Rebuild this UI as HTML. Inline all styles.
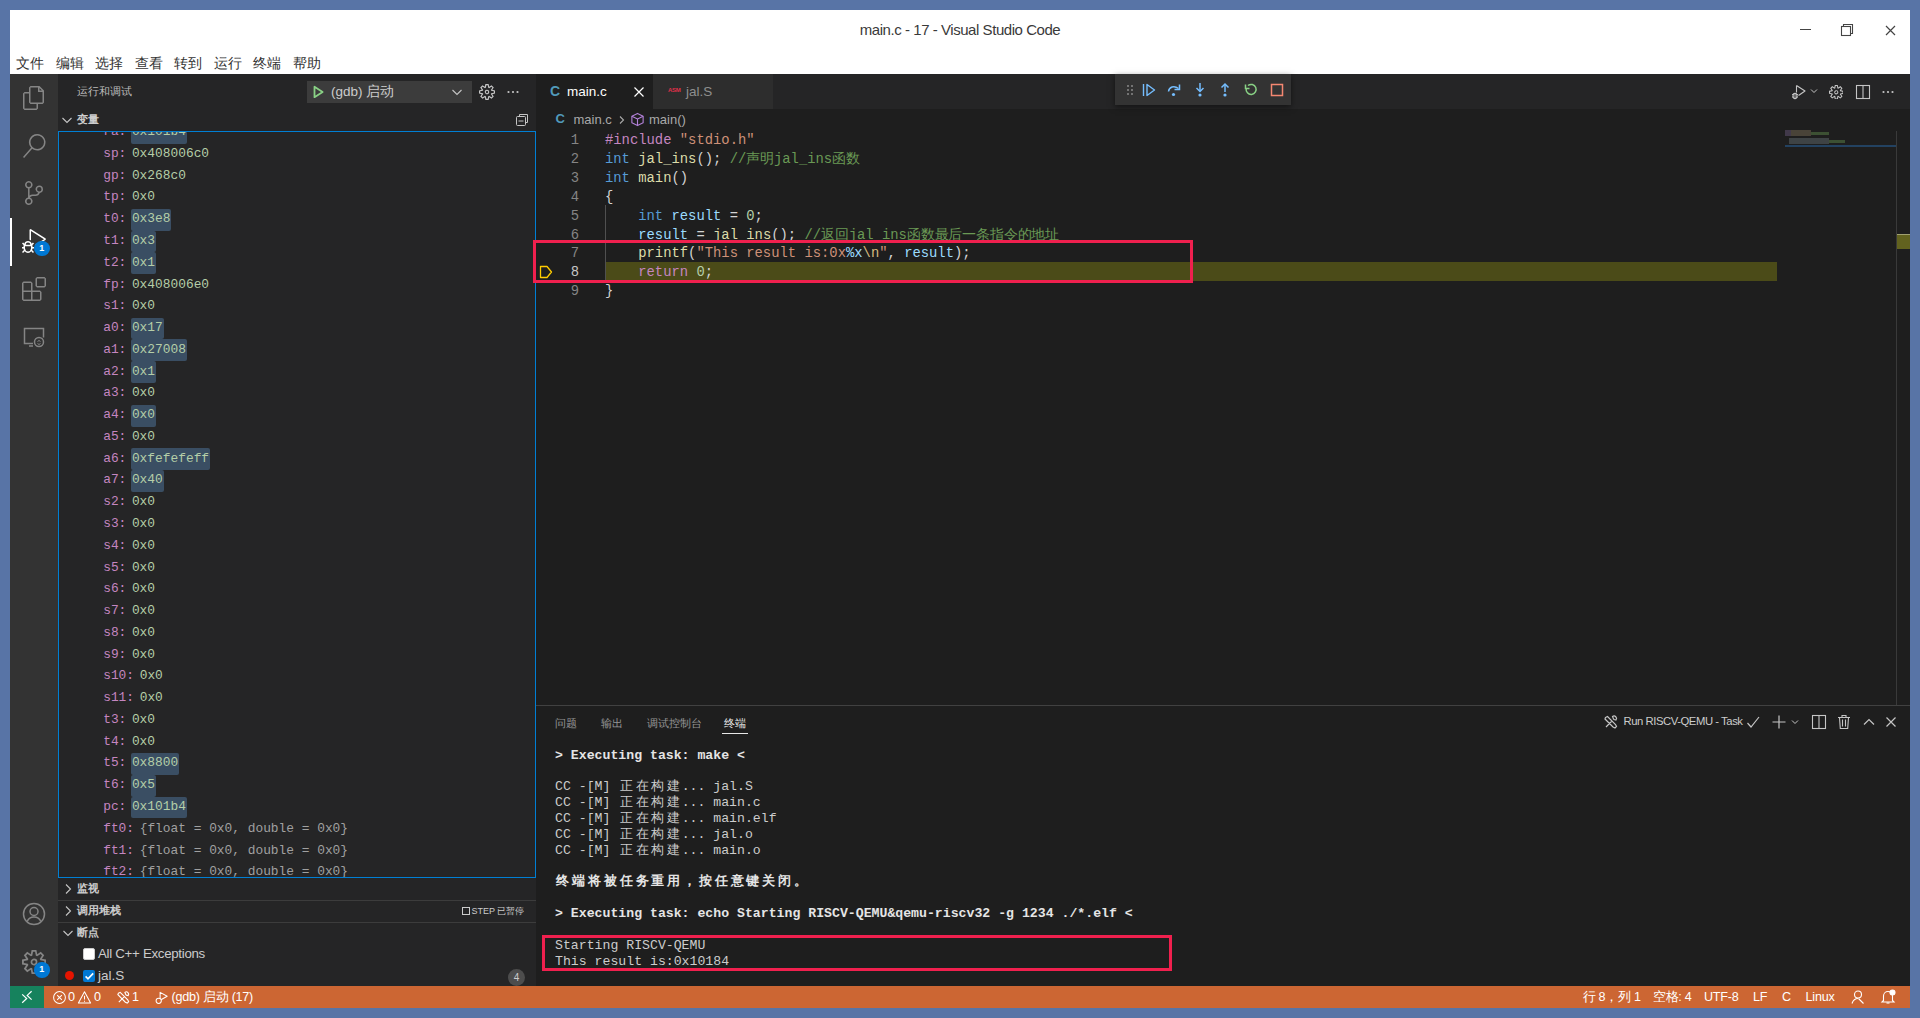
<!DOCTYPE html>
<html><head><meta charset="utf-8">
<style>
*{margin:0;padding:0;box-sizing:border-box}
html,body{width:1920px;height:1018px;overflow:hidden;background:#5874a6;font-family:"Liberation Sans",sans-serif}
.a{position:absolute;white-space:nowrap}
.mono{font-family:"Liberation Mono",monospace}
#titlebar{left:10px;top:10px;width:1900px;height:64px;background:#fff}
#act{left:10px;top:74px;width:47.5px;height:912px;background:#333}
#side{left:57.5px;top:74px;width:478px;height:912px;background:#252526}
#editor{left:535.5px;top:74px;width:1374.5px;height:631px;background:#1e1e1e}
#panel{left:535.5px;top:704.5px;width:1374.5px;height:281.5px;background:#1e1e1e;border-top:1px solid #414141}
#status{left:10px;top:986px;width:1900px;height:22px;background:#cc6633}
#remote{left:10px;top:986px;width:33.5px;height:22px;background:#16825d}
.vr{left:0px;width:476px;height:21.77px;line-height:21.77px}
.vn{color:#c586c0}.vv{color:#b5cea8}.vg{color:#a0a0a0}
.hl{top:0.6px;height:21.8px;background:#3a4e63;border-radius:2px}
.cl{white-space:pre;left:69.5px;margin-top:0.5px;height:18.9px;line-height:18.9px;color:#d4d4d4}
.ln{left:21.5px;margin-top:0.5px;width:22px;text-align:right;height:18.9px;line-height:18.9px}
.cj{font-style:normal;display:inline-block;width:13.85px;text-align:center}
.tl{white-space:pre;left:19.5px;height:15.83px;line-height:15.83px;color:#ccc}
.tj{font-style:normal;display:inline-block;width:15.84px;text-align:center}
</style></head><body>
<div id="titlebar" class="a">
<div class="a" style="left:0px;top:11px;width:1900px;text-align:center;font-size:15px;letter-spacing:-0.45px;color:#3a3a3a;line-height:18px">main.c - 17 - Visual Studio Code</div>
<div class="a" style="left:1790px;top:18.5px;width:10.5px;height:1.2px;background:#444"></div>
<svg class="a" style="left:1830px;top:13px" width="14" height="14" viewBox="0 0 14 14"><path d="M3.5 3.5V1.5h9v9h-2" fill="none" stroke="#444" stroke-width="1.1"/><rect x="1.5" y="3.5" width="9" height="9" fill="none" stroke="#444" stroke-width="1.1"/></svg>
<svg class="a" style="left:1875px;top:14.5px" width="11" height="11" viewBox="0 0 11 11"><path d="M1 1L10 10M10 1L1 10" stroke="#444" stroke-width="1.2"/></svg>
<div class="a" id="menu" style="left:0px;top:45px;height:18px;font-size:13.5px;color:#333;line-height:18px">
<span class="a" style="left:6px">文件</span><span class="a" style="left:45.5px">编辑</span><span class="a" style="left:85px">选择</span><span class="a" style="left:124.5px">查看</span><span class="a" style="left:164px">转到</span><span class="a" style="left:203.5px">运行</span><span class="a" style="left:243px">终端</span><span class="a" style="left:282.5px">帮助</span>
</div>
</div>
<div id="act" class="a">
<svg class="a" style="left:12px;top:12px" width="24" height="24" viewBox="0 0 24 24" fill="#858585"><path d="M17.5 0h-9L7 1.5V6H2.5L1 7.5v15.07L2.5 24h12.07L16 22.57V18h4.7l1.3-1.43V4.5L17.5 0zm0 2.12l2.38 2.38H17.5V2.12zm-3 20.38h-12v-15H7v9.07L8.5 18h6v4.5zm6-6h-12v-15H16V6h4.5v10.5z"/></svg>
<svg class="a" style="left:12px;top:59.5px" width="24" height="24" viewBox="0 0 24 24" fill="#858585"><path d="M15.25 0a8.25 8.25 0 0 0-6.18 13.72L1 22.88l1.12 1 8.05-9.120A8.251 8.251 0 1 0 15.25.01V0zm0 15a6.750 6.750 0 1 1 0-13.5 6.75 6.75 0 0 1 0 13.5z"/></svg>
<svg class="a" style="left:12px;top:107px" width="24" height="24" viewBox="0 0 24 24" fill="#858585"><path d="M21.007 8.222A3.738 3.738 0 0 0 15.045 5.2a3.737 3.737 0 0 0 1.156 6.583 2.988 2.988 0 0 1-2.668 1.67h-2.99a4.456 4.456 0 0 0-2.989 1.165V7.4a3.737 3.737 0 1 0-1.494 0v9.117a3.776 3.776 0 1 0 1.816.099 2.990 2.990 0 0 1 2.668-1.667h2.99a4.484 4.484 0 0 0 4.223-3.039 3.736 3.736 0 0 0 3.25-3.687zM4.565 3.738a2.242 2.242 0 1 1 4.484 0 2.242 2.242 0 0 1-4.484 0zm4.484 16.441a2.242 2.242 0 1 1-4.484 0 2.242 2.242 0 0 1 4.484 0zm8.221-9.715a2.242 2.242 0 1 1 0-4.485 2.242 2.242 0 0 1 0 4.485z"/></svg>
<div class="a" style="left:0px;top:144px;width:2px;height:47.5px;background:#fff"></div>
<svg class="a" style="left:12px;top:155px" width="24" height="24" viewBox="0 0 24 24" fill="#fff"><path d="M10.94 13.5l-1.32 1.32a3.73 3.73 0 0 0-7.24 0L1.06 13.5 0 14.56l1.72 1.72-.22.22V18H0v1.5h1.5v.08c.077.489.214.966.41 1.42L0 22.94 1.06 24l1.65-1.65A4.308 4.308 0 0 0 6 24a4.31 4.31 0 0 0 3.29-1.650L10.94 24 12 22.94 10.09 21c.198-.464.336-.951.41-1.45v-.1H12V18h-1.5v-1.5l-.22-.22L12 14.56l-1.06-1.06zM6 13.5a2.25 2.25 0 0 1 2.25 2.25h-4.5A2.25 2.25 0 0 1 6 13.5zm3 6a3.33 3.33 0 0 1-3 3 3.33 3.330 0 0 1-3-3v-2.25h6v2.25zm14.76-9.9v1.26L13.5 17.37V15.6l8.5-5.37L9 2v9.46a5.07 5.07 0 0 0-1.5-.72V.63L8.64 0l15.12 9.6z"/></svg>
<div class="a" style="left:24px;top:166.5px;width:15.5px;height:15.5px;border-radius:50%;background:#0078d4;color:#fff;font-size:9px;line-height:15.5px;text-align:center;font-weight:bold">1</div>
<svg class="a" style="left:12px;top:202.5px" width="24" height="24" viewBox="0 0 24 24" fill="#858585"><path d="M13.5 1.5L15 0h7.5L24 1.5V9l-1.5 1.5H15L13.5 9V1.5zm1.5 0V9h7.5V1.5H15zM0 15V6l1.5-1.5H9L10.5 6v7.5H18l1.5 1.5v7.5L18 24H1.5L0 22.5V15zm9-1.5V6H1.5v7.5H9zM9 15H1.5v7.5H9V15zm1.5 7.5H18V15h-7.5v7.5z"/></svg>
<svg class="a" style="left:12px;top:250px" width="24" height="24" viewBox="0 0 24 24" fill="none" stroke="#858585" stroke-width="1.5"><path d="M11 19.5H2.5v-15h19v9"/><path d="M7 22h4"/><circle cx="17" cy="18" r="4.5"/><path d="M15.5 17.5l1.5-1 1.5 1M15.5 19.5l1.5 1 1.5-1" stroke-width="1"/></svg>
<svg class="a" style="left:12px;top:828px" width="24" height="24" viewBox="0 0 24 24" fill="none" stroke="#858585" stroke-width="1.5"><circle cx="12" cy="12" r="10.5"/><circle cx="12" cy="9.5" r="4"/><path d="M5.2 19.5c1.2-3 3.7-4.6 6.8-4.6s5.6 1.6 6.8 4.6"/></svg>
<svg class="a" style="left:12px;top:876px" width="24" height="24" viewBox="0 0 24 24" fill="#858585"><path d="M19.85 8.75l4.15.83v4.84l-4.15.83 2.35 3.52-3.43 3.43-3.52-2.35-.83 4.15H9.58l-.83-4.15-3.52 2.35-3.43-3.43 2.35-3.52L0 14.42V9.58l4.15-.83L1.8 5.23 5.230 1.8l3.52 2.35L9.58 0h4.84l.83 4.15 3.52-2.35 3.43 3.43-2.35 3.52zm-1.57 5.07l4-.81v-2l-4-.81-.54-1.3 2.29-3.43-1.43-1.43-3.43 2.29-1.3-.54-.81-4h-2l-.81 4-1.3.54-3.43-2.29-1.43 1.43L6.38 8.9l-.54 1.3-4 .81v2l4 .81.54 1.3-2.29 3.43 1.43 1.43 3.43-2.29 1.3.54.81 4h2l.81-4 1.3-.54 3.43 2.29 1.43-1.43-2.29-3.43.54-1.3zm-8.186-4.672A3.43 3.43 0 0 1 12 8.57 3.44 3.44 0 0 1 15.43 12a3.43 3.43 0 1 1-5.336-2.852zm.956 4.274c.281.188.612.288.95.288A1.7 1.7 0 0 0 13.71 12a1.71 1.71 0 1 0-2.66 1.422z"/></svg>
<div class="a" style="left:24px;top:888px;width:15.5px;height:15.5px;border-radius:50%;background:#0078d4;color:#fff;font-size:9px;line-height:15.5px;text-align:center;font-weight:bold">1</div>
</div>
<div id="side" class="a">
<div class="a" style="left:19.5px;top:10px;font-size:11px;line-height:15px;color:#bbb">运行和调试</div>
<div class="a" style="left:249.5px;top:7px;width:165px;height:22px;background:#3c3c3c"></div>
<svg class="a" style="left:252.5px;top:10px" width="16" height="16" viewBox="0 0 16 16"><path d="M4.5 2.8v10.4L12.6 8z" fill="none" stroke="#89d185" stroke-width="1.8" stroke-linejoin="round"/></svg>
<div class="a" style="left:273.5px;top:8px;font-size:13.5px;line-height:20px;color:#ccc">(gdb) 启动</div>
<svg class="a" style="left:391.5px;top:10px" width="16" height="16" viewBox="0 0 16 16"><path d="M3.5 6l4.5 4.5L12.5 6" fill="none" stroke="#c5c5c5" stroke-width="1.1"/></svg>
<svg class="a" style="left:421.5px;top:9.5px" width="16" height="16" viewBox="0 0 24 24" fill="#c5c5c5"><path d="M19.85 8.75l4.15.83v4.84l-4.15.83 2.35 3.52-3.43 3.43-3.52-2.35-.83 4.15H9.58l-.83-4.15-3.52 2.35-3.43-3.43 2.35-3.52L0 14.42V9.58l4.15-.83L1.8 5.23 5.230 1.8l3.52 2.35L9.58 0h4.84l.83 4.15 3.52-2.35 3.43 3.43-2.35 3.52zm-1.57 5.07l4-.81v-2l-4-.81-.54-1.3 2.29-3.43-1.43-1.43-3.43 2.29-1.3-.54-.81-4h-2l-.81 4-1.3.54-3.43-2.29-1.43 1.43L6.38 8.9l-.54 1.3-4 .81v2l4 .81.54 1.3-2.29 3.43 1.43 1.43 3.43-2.29 1.3.54.81 4h2l.81-4 1.3-.54 3.43 2.29 1.43-1.43-2.29-3.43.54-1.3zm-8.186-4.672A3.43 3.43 0 0 1 12 8.57 3.44 3.44 0 0 1 15.43 12a3.43 3.43 0 1 1-5.336-2.852zm.956 4.274c.281.188.612.288.95.288A1.7 1.7 0 0 0 13.71 12a1.71 1.71 0 1 0-2.66 1.422z"/></svg>
<svg class="a" style="left:447px;top:9.5px" width="16" height="16" viewBox="0 0 16 16" fill="#c5c5c5"><circle cx="3.5" cy="8" r="1.1"/><circle cx="8" cy="8" r="1.1"/><circle cx="12.5" cy="8" r="1.1"/></svg>
<svg class="a" style="left:1.5px;top:38px" width="16" height="16" viewBox="0 0 16 16"><path d="M3.5 6l4.5 4.5L12.5 6" fill="none" stroke="#c5c5c5" stroke-width="1.1"/></svg>
<div class="a" style="left:19.5px;top:37.5px;font-size:11px;line-height:15px;color:#ccc;font-weight:bold">变量</div>
<svg class="a" style="left:456px;top:37.5px" width="16" height="16" viewBox="0 0 16 16" fill="none" stroke="#c5c5c5" stroke-width="1"><path d="M5.5 4.5V2.5h8v8h-2"/><rect x="2.5" y="4.5" width="9" height="9" rx="1"/><path d="M4.5 9h5"/></svg>
<div class="a" id="varbox" style="left:0px;top:57px;width:478px;height:746.5px;border:1px solid #007fd4"></div>
<div class="a mono" style="left:1px;top:58px;width:476px;height:744.5px;overflow:hidden;font-size:12.86px">
<div class="a vr" style="top:-10.87px"><span class="a vn" style="left:44.7px">ra:</span><span class="a hl" style="left:72.7px;width:55.5px"></span><span class="a vv" style="left:73.4px">0x101b4</span></div>
<div class="a vr" style="top:10.90px"><span class="a vn" style="left:44.7px">sp:</span><span class="a vv" style="left:73.4px">0x408006c0</span></div>
<div class="a vr" style="top:32.67px"><span class="a vn" style="left:44.7px">gp:</span><span class="a vv" style="left:73.4px">0x268c0</span></div>
<div class="a vr" style="top:54.44px"><span class="a vn" style="left:44.7px">tp:</span><span class="a vv" style="left:73.4px">0x0</span></div>
<div class="a vr" style="top:76.21px"><span class="a vn" style="left:44.7px">t0:</span><span class="a hl" style="left:72.7px;width:40.1px"></span><span class="a vv" style="left:73.4px">0x3e8</span></div>
<div class="a vr" style="top:97.98px"><span class="a vn" style="left:44.7px">t1:</span><span class="a hl" style="left:72.7px;width:24.6px"></span><span class="a vv" style="left:73.4px">0x3</span></div>
<div class="a vr" style="top:119.75px"><span class="a vn" style="left:44.7px">t2:</span><span class="a hl" style="left:72.7px;width:24.6px"></span><span class="a vv" style="left:73.4px">0x1</span></div>
<div class="a vr" style="top:141.52px"><span class="a vn" style="left:44.7px">fp:</span><span class="a vv" style="left:73.4px">0x408006e0</span></div>
<div class="a vr" style="top:163.29px"><span class="a vn" style="left:44.7px">s1:</span><span class="a vv" style="left:73.4px">0x0</span></div>
<div class="a vr" style="top:185.06px"><span class="a vn" style="left:44.7px">a0:</span><span class="a hl" style="left:72.7px;width:32.4px"></span><span class="a vv" style="left:73.4px">0x17</span></div>
<div class="a vr" style="top:206.83px"><span class="a vn" style="left:44.7px">a1:</span><span class="a hl" style="left:72.7px;width:55.5px"></span><span class="a vv" style="left:73.4px">0x27008</span></div>
<div class="a vr" style="top:228.60px"><span class="a vn" style="left:44.7px">a2:</span><span class="a hl" style="left:72.7px;width:24.6px"></span><span class="a vv" style="left:73.4px">0x1</span></div>
<div class="a vr" style="top:250.37px"><span class="a vn" style="left:44.7px">a3:</span><span class="a vv" style="left:73.4px">0x0</span></div>
<div class="a vr" style="top:272.14px"><span class="a vn" style="left:44.7px">a4:</span><span class="a hl" style="left:72.7px;width:24.6px"></span><span class="a vv" style="left:73.4px">0x0</span></div>
<div class="a vr" style="top:293.91px"><span class="a vn" style="left:44.7px">a5:</span><span class="a vv" style="left:73.4px">0x0</span></div>
<div class="a vr" style="top:315.68px"><span class="a vn" style="left:44.7px">a6:</span><span class="a hl" style="left:72.7px;width:78.7px"></span><span class="a vv" style="left:73.4px">0xfefefeff</span></div>
<div class="a vr" style="top:337.45px"><span class="a vn" style="left:44.7px">a7:</span><span class="a hl" style="left:72.7px;width:32.4px"></span><span class="a vv" style="left:73.4px">0x40</span></div>
<div class="a vr" style="top:359.22px"><span class="a vn" style="left:44.7px">s2:</span><span class="a vv" style="left:73.4px">0x0</span></div>
<div class="a vr" style="top:380.99px"><span class="a vn" style="left:44.7px">s3:</span><span class="a vv" style="left:73.4px">0x0</span></div>
<div class="a vr" style="top:402.76px"><span class="a vn" style="left:44.7px">s4:</span><span class="a vv" style="left:73.4px">0x0</span></div>
<div class="a vr" style="top:424.53px"><span class="a vn" style="left:44.7px">s5:</span><span class="a vv" style="left:73.4px">0x0</span></div>
<div class="a vr" style="top:446.30px"><span class="a vn" style="left:44.7px">s6:</span><span class="a vv" style="left:73.4px">0x0</span></div>
<div class="a vr" style="top:468.07px"><span class="a vn" style="left:44.7px">s7:</span><span class="a vv" style="left:73.4px">0x0</span></div>
<div class="a vr" style="top:489.84px"><span class="a vn" style="left:44.7px">s8:</span><span class="a vv" style="left:73.4px">0x0</span></div>
<div class="a vr" style="top:511.61px"><span class="a vn" style="left:44.7px">s9:</span><span class="a vv" style="left:73.4px">0x0</span></div>
<div class="a vr" style="top:533.38px"><span class="a vn" style="left:44.7px">s10:</span><span class="a vv" style="left:81.2px">0x0</span></div>
<div class="a vr" style="top:555.15px"><span class="a vn" style="left:44.7px">s11:</span><span class="a vv" style="left:81.2px">0x0</span></div>
<div class="a vr" style="top:576.92px"><span class="a vn" style="left:44.7px">t3:</span><span class="a vv" style="left:73.4px">0x0</span></div>
<div class="a vr" style="top:598.69px"><span class="a vn" style="left:44.7px">t4:</span><span class="a vv" style="left:73.4px">0x0</span></div>
<div class="a vr" style="top:620.46px"><span class="a vn" style="left:44.7px">t5:</span><span class="a hl" style="left:72.7px;width:47.8px"></span><span class="a vv" style="left:73.4px">0x8800</span></div>
<div class="a vr" style="top:642.23px"><span class="a vn" style="left:44.7px">t6:</span><span class="a hl" style="left:72.7px;width:24.6px"></span><span class="a vv" style="left:73.4px">0x5</span></div>
<div class="a vr" style="top:664.00px"><span class="a vn" style="left:44.7px">pc:</span><span class="a hl" style="left:72.7px;width:55.5px"></span><span class="a vv" style="left:73.4px">0x101b4</span></div>
<div class="a vr" style="top:685.77px"><span class="a vn" style="left:44.7px">ft0:</span><span class="a vg" style="left:81.2px">{float = 0x0, double = 0x0}</span></div>
<div class="a vr" style="top:707.54px"><span class="a vn" style="left:44.7px">ft1:</span><span class="a vg" style="left:81.2px">{float = 0x0, double = 0x0}</span></div>
<div class="a vr" style="top:729.31px"><span class="a vn" style="left:44.7px">ft2:</span><span class="a vg" style="left:81.2px">{float = 0x0, double = 0x0}</span></div>
</div>
<div class="a" style="left:0px;top:825.5px;width:478px;height:1px;background:#3c3c3c"></div>
<div class="a" style="left:0px;top:847.5px;width:478px;height:1px;background:#3c3c3c"></div>
<svg class="a" style="left:2px;top:806.5px" width="16" height="16" viewBox="0 0 16 16"><path d="M6 3.5l4.5 4.5L6 12.5" fill="none" stroke="#c5c5c5" stroke-width="1.1"/></svg>
<div class="a" style="left:19.5px;top:807px;font-size:11px;line-height:15px;color:#ccc;font-weight:bold">监视</div>
<svg class="a" style="left:2px;top:828.5px" width="16" height="16" viewBox="0 0 16 16"><path d="M6 3.5l4.5 4.5L6 12.5" fill="none" stroke="#c5c5c5" stroke-width="1.1"/></svg>
<div class="a" style="left:19.5px;top:829px;font-size:11px;line-height:15px;color:#ccc;font-weight:bold">调用堆栈</div>
<div class="a" style="left:404px;top:830.5px;font-size:9px;line-height:12px;color:#ccc"><span style="display:inline-block;width:8px;height:8px;border:1px solid #ccc;vertical-align:-1px;margin-right:2px"></span>STEP 已暂停</div>
<svg class="a" style="left:2px;top:851px" width="16" height="16" viewBox="0 0 16 16"><path d="M3.5 6l4.5 4.5L12.5 6" fill="none" stroke="#c5c5c5" stroke-width="1.1"/></svg>
<div class="a" style="left:19.5px;top:851px;font-size:11px;line-height:15px;color:#ccc;font-weight:bold">断点</div>
<div class="a" style="left:25px;top:874px;width:12px;height:12px;background:#fff;border:1px solid #ccc;border-radius:2px"></div>
<div class="a" style="left:40.5px;top:871px;font-size:13.3px;letter-spacing:-0.3px;line-height:18px;color:#ccc">All C++ Exceptions</div>
<div class="a" style="left:7px;top:897px;width:9px;height:9px;border-radius:50%;background:#e51400"></div>
<div class="a" style="left:25px;top:895.5px;width:12.5px;height:12.5px;background:#0078d4;border-radius:2px"></div>
<svg class="a" style="left:25px;top:895.5px" width="12.5" height="12.5" viewBox="0 0 12 12"><path d="M2.5 6.2l2.3 2.3L9.8 3.3" fill="none" stroke="#fff" stroke-width="1.6"/></svg>
<div class="a" style="left:40.5px;top:892.5px;font-size:13.5px;line-height:18px;color:#ccc">jal.S</div>
<div class="a" style="left:450.5px;top:894.5px;width:17px;height:17px;border-radius:50%;background:#4d4d4d;color:#ccc;font-size:10px;line-height:17px;text-align:center">4</div>
</div>
<div id="editor" class="a">
<div class="a" style="left:0px;top:0px;width:1374.5px;height:34.5px;background:#252526"></div>
<div class="a" style="left:0px;top:0px;width:117px;height:34.5px;background:#1e1e1e"></div>
<div class="a" style="left:14.5px;top:8px;font-size:14px;line-height:18px;color:#519aba;font-weight:bold">C</div>
<div class="a" style="left:31.5px;top:8.5px;font-size:13.5px;line-height:18px;color:#fff">main.c</div>
<svg class="a" style="left:95.5px;top:9.5px" width="16" height="16" viewBox="0 0 16 16"><path d="M3.5 3.5l9 9M12.5 3.5l-9 9" stroke="#fff" stroke-width="1.2"/></svg>
<div class="a" style="left:117px;top:0px;width:120px;height:34.5px;background:#2d2d2d"></div>
<div class="a" style="left:132.5px;top:12px;font-size:6px;line-height:9px;color:#e0304a;font-weight:bold;letter-spacing:-0.3px">ASM</div>
<div class="a" style="left:150.5px;top:8.5px;font-size:13.5px;line-height:18px;color:#8f8f8f">jal.S</div>
<div class="a" style="left:579px;top:0px;width:176.5px;height:31px;background:#333;box-shadow:0 2px 6px rgba(0,0,0,.5)"></div>
<svg class="a" style="left:586px;top:7.5px" width="16" height="16" viewBox="0 0 16 16" fill="#8a8a8a"><circle cx="6" cy="4" r="1"/><circle cx="10" cy="4" r="1"/><circle cx="6" cy="8" r="1"/><circle cx="10" cy="8" r="1"/><circle cx="6" cy="12" r="1"/><circle cx="10" cy="12" r="1"/></svg>
<svg class="a" style="left:605px;top:7.5px" width="16" height="16" viewBox="0 0 16 16" fill="none" stroke="#75beff" stroke-width="1.4"><path d="M2.5 2v12"/><path d="M6 2.5v11L13.5 8z" stroke-linejoin="round"/></svg>
<svg class="a" style="left:630.5px;top:7.5px" width="16" height="16" viewBox="0 0 16 16" fill="none" stroke="#75beff" stroke-width="1.5"><path d="M2.5 9.5C3 5 8 3 12.5 6.5"/><path d="M13.5 2.5v5h-5"/><circle cx="7.5" cy="12.5" r="1.6" fill="#75beff" stroke="none"/></svg>
<svg class="a" style="left:656px;top:7.5px" width="16" height="16" viewBox="0 0 16 16" fill="none" stroke="#75beff" stroke-width="1.5"><path d="M8 1v8"/><path d="M4.5 6l3.5 3.5L11.5 6"/><circle cx="8" cy="13" r="1.6" fill="#75beff" stroke="none"/></svg>
<svg class="a" style="left:681.5px;top:7.5px" width="16" height="16" viewBox="0 0 16 16" fill="none" stroke="#75beff" stroke-width="1.5"><path d="M8 10V2"/><path d="M4.5 5.5L8 2l3.5 3.5"/><circle cx="8" cy="13" r="1.6" fill="#75beff" stroke="none"/></svg>
<svg class="a" style="left:707.5px;top:7.5px" width="16" height="16" viewBox="0 0 16 16" fill="none" stroke="#89d185" stroke-width="1.5"><path d="M3.2 6.5A5 5 0 1 0 5 3.5"/><path d="M2.5 2.5v4h4"/></svg>
<svg class="a" style="left:733px;top:7.5px" width="16" height="16" viewBox="0 0 16 16" fill="none" stroke="#f48771" stroke-width="1.5"><rect x="2.5" y="2.5" width="11" height="11"/></svg>
<svg class="a" style="left:1255px;top:9.5px" width="18" height="16" viewBox="0 0 18 16" fill="none" stroke="#c5c5c5" stroke-width="1.1"><path d="M5.5 1.5v7M5.5 1.5L14 7l-6.5 4.5" stroke-linejoin="round"/><ellipse cx="4" cy="12" rx="2" ry="2.6" fill="#1e1e1e"/><path d="M1 10.5h1.5M1 13h1.5M5.5 10.5H7M5.5 13H7M4 9.4v5" stroke-width="0.9"/></svg>
<svg class="a" style="left:1273px;top:12px" width="10" height="10" viewBox="0 0 10 10"><path d="M2 3.5l3 3 3-3" fill="none" stroke="#c5c5c5" stroke-width="1"/></svg>
<svg class="a" style="left:1293.2px;top:10.6px" width="14.6" height="14.6" viewBox="0 0 24 24" fill="#c5c5c5"><path d="M19.85 8.75l4.15.83v4.84l-4.15.83 2.35 3.52-3.43 3.43-3.52-2.35-.83 4.15H9.58l-.83-4.15-3.52 2.35-3.43-3.43 2.35-3.52L0 14.42V9.58l4.15-.83L1.8 5.23 5.230 1.8l3.52 2.35L9.58 0h4.84l.83 4.15 3.52-2.35 3.43 3.43-2.35 3.52zm-1.57 5.07l4-.81v-2l-4-.81-.54-1.3 2.29-3.43-1.43-1.43-3.43 2.29-1.3-.54-.81-4h-2l-.81 4-1.3.54-3.43-2.29-1.43 1.43L6.38 8.9l-.54 1.3-4 .81v2l4 .81.54 1.3-2.29 3.43 1.43 1.43 3.43-2.29 1.3.54.81 4h2l.81-4 1.3-.54 3.43 2.29 1.43-1.43-2.29-3.43.54-1.3zm-8.186-4.672A3.43 3.43 0 0 1 12 8.57 3.44 3.44 0 0 1 15.430 12a3.43 3.43 0 1 1-5.336-2.852zm.956 4.274c.281.188.612.288.95.288A1.7 1.7 0 0 0 13.71 12a1.71 1.71 0 1 0-2.66 1.422z"/></svg>
<svg class="a" style="left:1319px;top:10px" width="16" height="16" viewBox="0 0 16 16" fill="none" stroke="#c5c5c5" stroke-width="1.1"><rect x="1.5" y="1.5" width="13" height="13"/><path d="M8 1.5v13"/></svg>
<svg class="a" style="left:1344px;top:10px" width="16" height="16" viewBox="0 0 16 16" fill="#c5c5c5"><circle cx="3.5" cy="8" r="1.1"/><circle cx="8" cy="8" r="1.1"/><circle cx="12.5" cy="8" r="1.1"/></svg>
<div class="a" style="left:20px;top:37px;font-size:13px;line-height:16px;color:#519aba;font-weight:bold">C</div>
<div class="a" style="left:38px;top:37.5px;font-size:13px;line-height:16px;color:#a9a9a9">main.c</div>
<svg class="a" style="left:80.5px;top:38.5px" width="12" height="14" viewBox="0 0 12 14"><path d="M4 3.5L7.5 7 4 10.5" fill="none" stroke="#a9a9a9" stroke-width="1.1"/></svg>
<svg class="a" style="left:94.5px;top:38px" width="15" height="15" viewBox="0 0 16 16" fill="none" stroke="#b180d7" stroke-width="1.2" stroke-linejoin="round"><path d="M8 1.5l6 3v7l-6 3-6-3v-7z"/><path d="M2 4.5l6 3 6-3M8 7.5v7"/></svg>
<div class="a" style="left:113.5px;top:37.5px;font-size:13px;line-height:16px;color:#a9a9a9">main()</div>
<div class="a" style="left:69.5px;top:188.0px;width:1172.3px;height:18.7px;background:#4b4b18"></div>
<div class="a" style="left:69.0px;top:131.0px;width:1px;height:76px;background:#505050"></div>
<svg class="a" style="left:2.0px;top:189.5" width="16" height="16" viewBox="0 0 16 16"><path d="M2.5 2.5h6.5l4.5 5.5-4.5 5.5H2.5z" fill="none" stroke="#ffcc00" stroke-width="1.3" stroke-linejoin="round"/></svg>
<div class="a mono" style="left:0px;top:0px;font-size:13.85px">
<div class="a cl" style="top:56.6px"><span style="color:#c586c0">#include </span><span style="color:#ce9178">"stdio.h"</span></div>
<div class="a ln" style="top:56.6px;color:#858585">1</div>
<div class="a cl" style="top:75.5px"><span style="color:#569cd6">int</span><span style="color:#d4d4d4"> </span><span style="color:#dcdcaa">jal_ins</span><span style="color:#d4d4d4">(); </span><span style="color:#6a9955">//<i class="cj">声</i><i class="cj">明</i>jal_ins<i class="cj">函</i><i class="cj">数</i></span></div>
<div class="a ln" style="top:75.5px;color:#858585">2</div>
<div class="a cl" style="top:94.4px"><span style="color:#569cd6">int</span><span style="color:#d4d4d4"> </span><span style="color:#dcdcaa">main</span><span style="color:#d4d4d4">()</span></div>
<div class="a ln" style="top:94.4px;color:#858585">3</div>
<div class="a cl" style="top:113.2px"><span style="color:#d4d4d4">{</span></div>
<div class="a ln" style="top:113.2px;color:#858585">4</div>
<div class="a cl" style="top:132.2px"><span style="color:#d4d4d4">    </span><span style="color:#569cd6">int</span><span style="color:#d4d4d4"> </span><span style="color:#9cdcfe">result</span><span style="color:#d4d4d4"> = </span><span style="color:#b5cea8">0</span><span style="color:#d4d4d4">;</span></div>
<div class="a ln" style="top:132.2px;color:#858585">5</div>
<div class="a cl" style="top:151.1px"><span style="color:#d4d4d4">    </span><span style="color:#9cdcfe">result</span><span style="color:#d4d4d4"> = </span><span style="color:#dcdcaa">jal_ins</span><span style="color:#d4d4d4">(); </span><span style="color:#6a9955">//<i class="cj">返</i><i class="cj">回</i>jal_ins<i class="cj">函</i><i class="cj">数</i><i class="cj">最</i><i class="cj">后</i><i class="cj">一</i><i class="cj">条</i><i class="cj">指</i><i class="cj">令</i><i class="cj">的</i><i class="cj">地</i><i class="cj">址</i></span></div>
<div class="a ln" style="top:151.1px;color:#858585">6</div>
<div class="a cl" style="top:169.9px"><span style="color:#d4d4d4">    </span><span style="color:#dcdcaa">printf</span><span style="color:#d4d4d4">(</span><span style="color:#ce9178">"This result is:0x</span><span style="color:#9cdcfe">%x</span><span style="color:#d7ba7d">\n</span><span style="color:#ce9178">"</span><span style="color:#d4d4d4">, </span><span style="color:#9cdcfe">result</span><span style="color:#d4d4d4">);</span></div>
<div class="a ln" style="top:169.9px;color:#858585">7</div>
<div class="a cl" style="top:188.8px"><span style="color:#d4d4d4">    </span><span style="color:#c586c0">return</span><span style="color:#d4d4d4"> </span><span style="color:#b5cea8">0</span><span style="color:#d4d4d4">;</span></div>
<div class="a ln" style="top:188.8px;color:#c6c6c6">8</div>
<div class="a cl" style="top:207.8px"><span style="color:#d4d4d4">}</span></div>
<div class="a ln" style="top:207.8px;color:#858585">9</div>
</div>
<div class="a" style="left:-2.5px;top:166.0px;width:659.5px;height:43.0px;border:3px solid #f0204e"></div>
<div class="a" style="left:1360.5px;top:57.0px;width:1px;height:573.5px;background:#3a3a3a"></div>
<div class="a" style="left:1361.5px;top:159.5px;width:13px;height:15.5px;background:#62621f"></div>
<div class="a" style="left:1361.5px;top:159.5px;width:13px;height:1.5px;background:#a0a070"></div>
<div class="a" style="left:1249.5px;top:56px;width:6px;height:6px;background:#6c5a80;opacity:.45"></div>
<div class="a" style="left:1255.5px;top:56px;width:20px;height:6px;background:#8a7a60;opacity:.4"></div>
<div class="a" style="left:1275.5px;top:58px;width:18px;height:3px;background:#557a45;opacity:.55"></div>
<div class="a" style="left:1253.5px;top:63.5px;width:40px;height:6px;background:#7a8a90;opacity:.35"></div>
<div class="a" style="left:1293.5px;top:66px;width:16px;height:3px;background:#557a45;opacity:.55"></div>
<div class="a" style="left:1249.5px;top:70.5px;width:111px;height:2.5px;background:#264f78;opacity:.75"></div>
</div>
<div id="panel" class="a">
<div class="a" style="left:19.5px;top:10px;font-size:11px;line-height:15px;color:#969696">问题</div>
<div class="a" style="left:65.3px;top:10px;font-size:11px;line-height:15px;color:#969696">输出</div>
<div class="a" style="left:111.2px;top:10px;font-size:11px;line-height:15px;color:#969696">调试控制台</div>
<div class="a" style="left:188.25px;top:10px;font-size:11px;line-height:15px;color:#e7e7e7">终端</div>
<div class="a" style="left:186.5px;top:27.8px;width:26px;height:1px;background:#e7e7e7"></div>
<svg class="a" style="left:1067.5px;top:8.5px" width="16" height="16" viewBox="0 0 16 16" fill="none" stroke="#c5c5c5" stroke-width="1.2"><path d="M3 13l6-6M2.5 3.5l2-1 8 8 1 2-1.5 1.5-2-1-8-8z"/><path d="M9.5 2.5a2.5 2.5 0 0 1 3.5 3.5L11 5.5 10.5 5z"/></svg>
<div class="a" style="left:1088.0px;top:8.5px;font-size:11.3px;line-height:15px;color:#ccc;letter-spacing:-0.45px">Run RISCV-QEMU - Task</div>
<svg class="a" style="left:1209.5px;top:8.5px" width="16" height="16" viewBox="0 0 16 16" fill="none" stroke="#c5c5c5" stroke-width="1.2"><path d="M2.5 9l3.5 4L14 3"/></svg>
<svg class="a" style="left:1235.5px;top:8.5px" width="16" height="16" viewBox="0 0 16 16" fill="none" stroke="#c5c5c5" stroke-width="1.2"><path d="M8 1.5v13M1.5 8h13"/></svg>
<svg class="a" style="left:1254.5px;top:11.5px" width="10" height="10" viewBox="0 0 10 10"><path d="M2 3.5l3 3 3-3" fill="none" stroke="#c5c5c5" stroke-width="1"/></svg>
<svg class="a" style="left:1275.0px;top:8.5px" width="16" height="16" viewBox="0 0 16 16" fill="none" stroke="#c5c5c5" stroke-width="1.1"><rect x="1.5" y="1.5" width="13" height="13"/><path d="M8 1.5v13"/></svg>
<svg class="a" style="left:1300.0px;top:8.5px" width="16" height="16" viewBox="0 0 16 16" fill="none" stroke="#c5c5c5" stroke-width="1.1"><path d="M2 3.5h12M6 3.5V1.5h4v2M3.5 3.5l.8 11h7.4l.8-11M6.5 5.5v7M9.5 5.5v7"/></svg>
<svg class="a" style="left:1325.5px;top:8.5px" width="16" height="16" viewBox="0 0 16 16" fill="none" stroke="#c5c5c5" stroke-width="1.2"><path d="M3 10.5l5-5 5 5"/></svg>
<svg class="a" style="left:1347.5px;top:8.5px" width="16" height="16" viewBox="0 0 16 16" fill="none" stroke="#c5c5c5" stroke-width="1.2"><path d="M3.5 3.5l9 9M12.5 3.5l-9 9"/></svg>
<div class="a mono" style="left:0;top:0;font-size:13.2px">
<div class="a tl" style="top:42.2px;font-weight:bold;color:#e5e5e5">&gt; Executing task: make &lt;</div>
<div class="a tl" style="top:73.8px;">CC -[M] <i class="tj">正</i><i class="tj">在</i><i class="tj">构</i><i class="tj">建</i>... jal.S</div>
<div class="a tl" style="top:89.7px;">CC -[M] <i class="tj">正</i><i class="tj">在</i><i class="tj">构</i><i class="tj">建</i>... main.c</div>
<div class="a tl" style="top:105.5px;">CC -[M] <i class="tj">正</i><i class="tj">在</i><i class="tj">构</i><i class="tj">建</i>... main.elf</div>
<div class="a tl" style="top:121.3px;">CC -[M] <i class="tj">正</i><i class="tj">在</i><i class="tj">构</i><i class="tj">建</i>... jal.o</div>
<div class="a tl" style="top:137.2px;">CC -[M] <i class="tj">正</i><i class="tj">在</i><i class="tj">构</i><i class="tj">建</i>... main.o</div>
<div class="a tl" style="top:168.8px;font-weight:bold;color:#e5e5e5"><i class="tj">终</i><i class="tj">端</i><i class="tj">将</i><i class="tj">被</i><i class="tj">任</i><i class="tj">务</i><i class="tj">重</i><i class="tj">用</i><i class="tj">，</i><i class="tj">按</i><i class="tj">任</i><i class="tj">意</i><i class="tj">键</i><i class="tj">关</i><i class="tj">闭</i><i class="tj">。</i></div>
<div class="a tl" style="top:200.5px;font-weight:bold;color:#e5e5e5">&gt; Executing task: echo Starting RISCV-QEMU&amp;qemu-riscv32 -g 1234 ./*.elf &lt;</div>
<div class="a tl" style="top:232.1px;">Starting RISCV-QEMU</div>
<div class="a tl" style="top:248.0px;">This result is:0x10184</div>
</div>
<div class="a" style="left:6.3px;top:229.7px;width:630.0px;height:35.7px;border:3px solid #f0204e"></div>
</div>
<div id="status" class="a" style="font-size:12.6px;letter-spacing:-0.25px;line-height:22px;color:#fff">

<svg class="a" style="left:41.5px;top:3.5px" width="15" height="15" viewBox="0 0 16 16" fill="none" stroke="#fff" stroke-width="1.1"><circle cx="8" cy="8" r="6.3"/><path d="M5.5 5.5l5 5M10.5 5.5l-5 5"/></svg>
<span class="a" style="left:58px">0</span>
<svg class="a" style="left:66.5px;top:3.5px" width="15" height="15" viewBox="0 0 16 16" fill="none" stroke="#fff" stroke-width="1.1" stroke-linejoin="round"><path d="M8 1.8L14.5 13.8h-13z"/><path d="M8 6v4M8 11.5v1"/></svg>
<span class="a" style="left:84px">0</span>
<svg class="a" style="left:106px;top:3.5px" width="15" height="15" viewBox="0 0 16 16" fill="none" stroke="#fff" stroke-width="1.2"><path d="M3 13l6-6M2.5 3.5l2-1 8 8 1 2-1.5 1.5-2-1-8-8z"/><path d="M9.5 2.5a2.5 2.5 0 0 1 3.5 3.5L11 5.5 10.5 5z"/></svg>
<span class="a" style="left:122px">1</span>
<svg class="a" style="left:143.5px;top:3.5px" width="16" height="15" viewBox="0 0 16 16" fill="none" stroke="#fff" stroke-width="1.1" stroke-linejoin="round"><path d="M6 2.5v8.5L13.5 6.7z"/><circle cx="4.5" cy="11.5" r="2.8" fill="#cc6633"/></svg>
<span class="a" style="left:161.5px">(gdb) 启动 (17)</span>
<span class="a" style="left:1572.5px">行 8，列 1</span>
<span class="a" style="left:1642.8px">空格: 4</span>
<span class="a" style="left:1694px">UTF-8</span>
<span class="a" style="left:1743px">LF</span>
<span class="a" style="left:1772px">C</span>
<span class="a" style="left:1795.6px">Linux</span>
<svg class="a" style="left:1840px;top:3px" width="16" height="16" viewBox="0 0 16 16" fill="none" stroke="#fff" stroke-width="1.1"><circle cx="8" cy="5.5" r="3.5"/><path d="M2 14.5c1-3 3.3-5 6-5M8.5 9.5l5 5"/></svg>
<svg class="a" style="left:1870px;top:3px" width="16" height="16" viewBox="0 0 16 16" fill="none" stroke="#fff" stroke-width="1.1"><path d="M3.5 11.5V7a4.5 4.5 0 0 1 9 0v4.5l1.5 1.5H2z"/><path d="M6.5 14h3"/><circle cx="12.5" cy="3.5" r="2.5" fill="#fff"/></svg>
</div>
<div id="remote" class="a"><svg class="a" style="left:9px;top:3px" width="16" height="16" viewBox="0 0 16 16" fill="none" stroke="#fff" stroke-width="1.2"><path d="M3.2 5.4l4.5 4.1-4.5 4.2M12.6 2.3L8.2 6.4l4.4 4.2"/></svg></div>
</body></html>
